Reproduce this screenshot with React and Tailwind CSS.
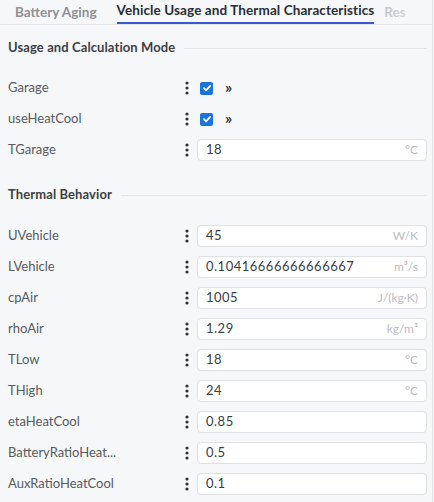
import React from "react";

const font = { fontFamily: "Lato, 'Noto Sans', sans-serif" };

function Dots() {
  return (
    <div className="w-[11px] flex justify-center shrink-0">
      <svg width="4" height="14" viewBox="0 0 4 14">
        <circle cx="2" cy="2" r="1.6" fill="#333" />
        <circle cx="2" cy="7" r="1.6" fill="#333" />
        <circle cx="2" cy="12" r="1.6" fill="#333" />
      </svg>
    </div>
  );
}

function Check() {
  return (
    <div className="w-[13px] h-[13px] rounded-[2px] bg-[#1b74d9] flex items-center justify-center">
      <svg width="10" height="10" viewBox="0 0 10 10">
        <path d="M2 5.2 L4.1 7.3 L8.2 2.8" stroke="#fff" strokeWidth="1.8" fill="none" strokeLinecap="round" strokeLinejoin="round" />
      </svg>
    </div>
  );
}

function Row({ label, children }) {
  return (
    <div className="flex items-center h-[22px]">
      <div className="w-[181px] pl-2 text-[13px] text-[#575a5f] truncate">{label}</div>
      <Dots />
      <div className="ml-[5px] flex-1 flex items-center">{children}</div>
    </div>
  );
}

function CheckRow({ label }) {
  return (
    <Row label={label}>
      <div className="ml-[3px] flex items-center gap-[12px]">
        <Check />
        <span className="text-[16px] leading-none text-[#333] font-bold -mt-[2px]">»</span>
      </div>
    </Row>
  );
}

function InputRow({ label, value, unit }) {
  return (
    <Row label={label}>
      <div className="w-[230px] h-[22px] bg-white border border-[#dfe1e5] rounded-[4px] flex items-center justify-between pl-[8px] pr-[8px]">
        <span className="text-[13px] tracking-[0.5px] text-[#3a3d42]">{value}</span>
        {unit && <span className="text-[12px] text-[#b9bcc1]">{unit}</span>}
      </div>
    </Row>
  );
}

function Header({ title, className }) {
  return (
    <div className={"flex items-center h-[20px] pl-2 pr-[5px] " + className}>
      <span className="text-[13px] font-bold text-[#3d4045] whitespace-nowrap tracking-[0.1px]">{title}</span>
      <div className="flex-1 h-px bg-[#e3e5e8] ml-[9px]" />
    </div>
  );
}

export default function App() {
  return (
    <div style={font} className="w-[434px] h-[502px] bg-[#f6f7f9] overflow-hidden flex">
      <div className="w-[433px] border-r border-[#e2e4e7] flex flex-col">
        <div className="h-[25px] border-b border-[#e3e5e8] flex items-end text-[13.5px] font-bold whitespace-nowrap relative overflow-hidden">
          <div className="pl-[15px] pb-[2px] text-[#8d9096]">Battery Aging</div>
          <div className="ml-[20px] pb-[2px] text-[#2a2d33] border-b-2 border-[#3b57d1] tracking-[0.1px]">Vehicle Usage and Thermal Characteristics</div>
          <div className="ml-[10px] pb-[2px] text-[#c5c7cb] w-[40px] overflow-hidden">Res</div>
          <div className="absolute right-0 top-0 bottom-0 w-[40px] bg-gradient-to-r from-transparent to-[#f6f7f9]" />
        </div>
        <Header title="Usage and Calculation Mode" className="mt-[13px]" />
        <div className="mt-[19px] flex flex-col gap-[9px]">
          <CheckRow label="Garage" />
          <CheckRow label="useHeatCool" />
          <InputRow label="TGarage" value="18" unit="°C" />
        </div>
        <Header title="Thermal Behavior" className="mt-[24px]" />
        <div className="mt-[20px] flex flex-col gap-[9px]">
          <InputRow label="UVehicle" value="45" unit="W/K" />
          <InputRow label="LVehicle" value="0.10416666666666667" unit="m³/s" />
          <InputRow label="cpAir" value="1005" unit="J/(kg·K)" />
          <InputRow label="rhoAir" value="1.29" unit="kg/m³" />
          <InputRow label="TLow" value="18" unit="°C" />
          <InputRow label="THigh" value="24" unit="°C" />
          <InputRow label="etaHeatCool" value="0.85" />
          <InputRow label="BatteryRatioHeat..." value="0.5" />
          <InputRow label="AuxRatioHeatCool" value="0.1" />
        </div>
      </div>
    </div>
  );
}
